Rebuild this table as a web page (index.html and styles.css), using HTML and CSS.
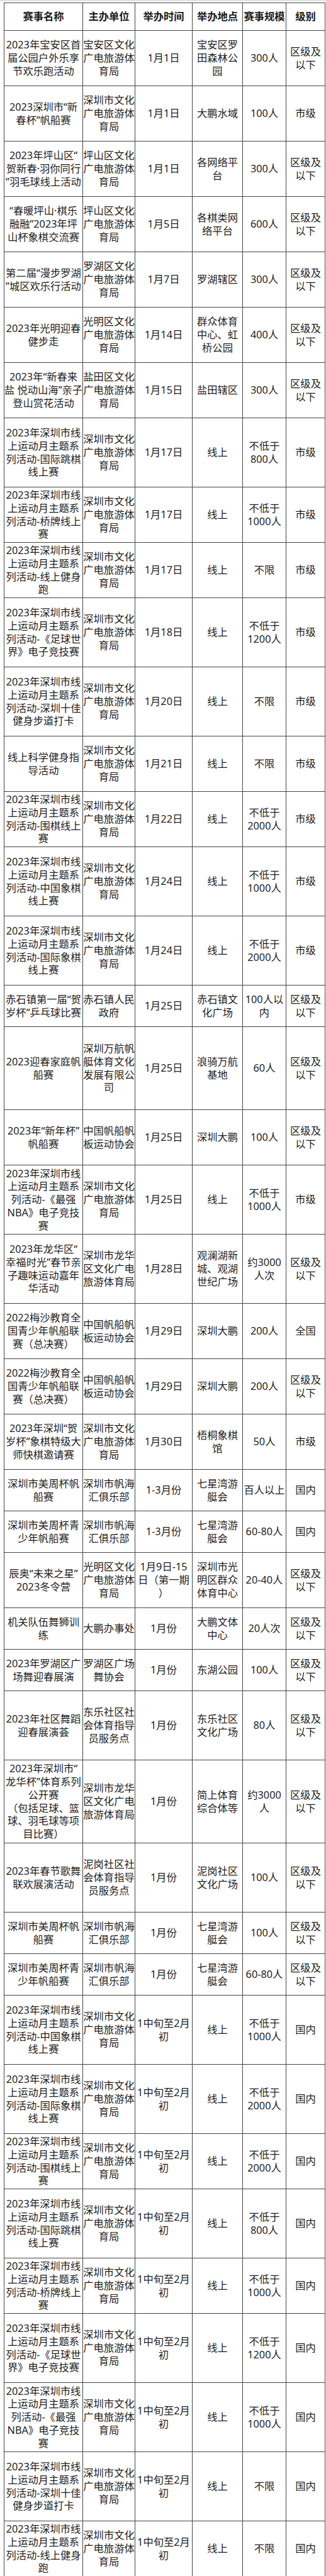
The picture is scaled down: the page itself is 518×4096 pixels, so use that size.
FILE: index.html
```html
<!DOCTYPE html>
<html lang="zh-CN">
<head>
<meta charset="utf-8">
<title>赛事列表</title>
<link rel="stylesheet" href="styles.css">
</head>
<body>
<div class="topbar"></div>
<table class="sheet">
<colgroup><col class="c1"><col class="c2"><col class="c3"><col class="c4"><col class="c5"><col class="c6"></colgroup>
<thead>
<tr class="hd"><th>赛事名称</th><th>主办单位</th><th>举办时间</th><th>举办地点</th><th>赛事规模</th><th>级别</th></tr>
</thead>
<tbody>
<tr class="u4"><td>2023年宝安区首<br>届公园户外乐享<br>节欢乐跑活动</td><td>宝安区文化<br>广电旅游体<br>育局</td><td>1月1日</td><td>宝安区罗<br>田森林公<br>园</td><td>300人</td><td>区级及<br>以下</td></tr>
<tr class="u4"><td>2023深圳市“新<br>春杯”帆船赛</td><td>深圳市文化<br>广电旅游体<br>育局</td><td>1月1日</td><td>大鹏水域</td><td>100人</td><td>市级</td></tr>
<tr class="u4"><td>2023年坪山区“<br>贺新春·羽你同行<br>”羽毛球线上活动</td><td>坪山区文化<br>广电旅游体<br>育局</td><td>1月1日</td><td>各网络平<br>台</td><td>300人</td><td>区级及<br>以下</td></tr>
<tr class="u4"><td>“春暖坪山·棋乐<br>融融”2023年坪<br>山杯象棋交流赛</td><td>坪山区文化<br>广电旅游体<br>育局</td><td>1月5日</td><td>各棋类网<br>络平台</td><td>600人</td><td>区级及<br>以下</td></tr>
<tr class="u4"><td>第二届“漫步罗湖<br>”城区欢乐行活动</td><td>罗湖区文化<br>广电旅游体<br>育局</td><td>1月7日</td><td>罗湖辖区</td><td>300人</td><td>区级及<br>以下</td></tr>
<tr class="u4"><td>2023年光明迎春<br>健步走</td><td>光明区文化<br>广电旅游体<br>育局</td><td>1月14日</td><td>群众体育<br>中心、虹<br>桥公园</td><td>400人</td><td>区级及<br>以下</td></tr>
<tr class="u4"><td>2023年“新春来<br>盐 悦动山海”亲子<br>登山赏花活动</td><td>盐田区文化<br>广电旅游体<br>育局</td><td>1月15日</td><td>盐田辖区</td><td>300人</td><td>区级及<br>以下</td></tr>
<tr class="u5"><td>2023年深圳市线<br>上运动月主题系<br>列活动-国际跳棋<br>线上赛</td><td>深圳市文化<br>广电旅游体<br>育局</td><td>1月17日</td><td>线上</td><td>不低于<br>800人</td><td>市级</td></tr>
<tr class="u4"><td>2023年深圳市线<br>上运动月主题系<br>列活动-桥牌线上<br>赛</td><td>深圳市文化<br>广电旅游体<br>育局</td><td>1月17日</td><td>线上</td><td>不低于<br>1000人</td><td>市级</td></tr>
<tr class="u4"><td>2023年深圳市线<br>上运动月主题系<br>列活动-线上健身<br>跑</td><td>深圳市文化<br>广电旅游体<br>育局</td><td>1月17日</td><td>线上</td><td>不限</td><td>市级</td></tr>
<tr class="u5"><td>2023年深圳市线<br>上运动月主题系<br>列活动-《足球世<br>界》电子竞技赛</td><td>深圳市文化<br>广电旅游体<br>育局</td><td>1月18日</td><td>线上</td><td>不低于<br>1200人</td><td>市级</td></tr>
<tr class="u5"><td>2023年深圳市线<br>上运动月主题系<br>列活动-深圳十佳<br>健身步道打卡</td><td>深圳市文化<br>广电旅游体<br>育局</td><td>1月20日</td><td>线上</td><td>不限</td><td>市级</td></tr>
<tr class="u4"><td>线上科学健身指<br>导活动</td><td>深圳市文化<br>广电旅游体<br>育局</td><td>1月21日</td><td>线上</td><td>不限</td><td>市级</td></tr>
<tr class="u4"><td>2023年深圳市线<br>上运动月主题系<br>列活动-围棋线上<br>赛</td><td>深圳市文化<br>广电旅游体<br>育局</td><td>1月22日</td><td>线上</td><td>不低于<br>2000人</td><td>市级</td></tr>
<tr class="u5"><td>2023年深圳市线<br>上运动月主题系<br>列活动-中国象棋<br>线上赛</td><td>深圳市文化<br>广电旅游体<br>育局</td><td>1月24日</td><td>线上</td><td>不低于<br>1000人</td><td>市级</td></tr>
<tr class="u5"><td>2023年深圳市线<br>上运动月主题系<br>列活动-国际象棋<br>线上赛</td><td>深圳市文化<br>广电旅游体<br>育局</td><td>1月24日</td><td>线上</td><td>不低于<br>2000人</td><td>市级</td></tr>
<tr class="u3"><td>赤石镇第一届“贺<br>岁杯”乒乓球比赛</td><td>赤石镇人民<br>政府</td><td>1月25日</td><td>赤石镇文<br>化广场</td><td>100人以<br>内</td><td>区级及<br>以下</td></tr>
<tr class="u6"><td>2023迎春家庭帆<br>船赛</td><td>深圳万航帆<br>艇体育文化<br>发展有限公<br>司</td><td>1月25日</td><td>浪骑万航<br>基地</td><td>60人</td><td>区级及<br>以下</td></tr>
<tr class="u4"><td>2023年“新年杯”<br>帆船赛</td><td>中国帆船帆<br>板运动协会</td><td>1月25日</td><td>深圳大鹏</td><td>100人</td><td>区级及<br>以下</td></tr>
<tr class="u5"><td>2023年深圳市线<br>上运动月主题系<br>列活动-《最强<br>NBA》电子竞技<br>赛</td><td>深圳市文化<br>广电旅游体<br>育局</td><td>1月25日</td><td>线上</td><td>不低于<br>1000人</td><td>市级</td></tr>
<tr class="u5"><td>2023年龙华区“<br>幸福时光”春节亲<br>子趣味运动嘉年<br>华活动</td><td>深圳市龙华<br>区文化广电<br>旅游体育局</td><td>1月28日</td><td>观澜湖新<br>城、观湖<br>世纪广场</td><td>约3000<br>人次</td><td>区级及<br>以下</td></tr>
<tr class="u4"><td>2022梅沙教育全<br>国青少年帆船联<br>赛（总决赛）</td><td>中国帆船帆<br>板运动协会</td><td>1月29日</td><td>深圳大鹏</td><td>200人</td><td>全国</td></tr>
<tr class="u4"><td>2022梅沙教育全<br>国青少年帆船联<br>赛（总决赛）</td><td>中国帆船帆<br>板运动协会</td><td>1月29日</td><td>深圳大鹏</td><td>200人</td><td>区级及<br>以下</td></tr>
<tr class="u4"><td>2023年深圳“贺<br>岁杯”象棋特级大<br>师快棋邀请赛</td><td>深圳市文化<br>广电旅游体<br>育局</td><td>1月30日</td><td>梧桐象棋<br>馆</td><td>50人</td><td>市级</td></tr>
<tr class="u3"><td>深圳市美周杯帆<br>船赛</td><td>深圳市帆海<br>汇俱乐部</td><td>1-3月份</td><td>七星湾游<br>艇会</td><td>百人以上</td><td>国内</td></tr>
<tr class="u3"><td>深圳市美周杯青<br>少年帆船赛</td><td>深圳市帆海<br>汇俱乐部</td><td>1-3月份</td><td>七星湾游<br>艇会</td><td>60-80人</td><td>国内</td></tr>
<tr class="u4"><td>辰奥“未来之星”<br>2023冬令营</td><td>光明区文化<br>广电旅游体<br>育局</td><td>1月9日-15<br>日（第一期<br>）</td><td>深圳市光<br>明区群众<br>体育中心</td><td>20-40人</td><td>区级及<br>以下</td></tr>
<tr class="u3"><td>机关队伍舞狮训<br>练</td><td>大鹏办事处</td><td>1月份</td><td>大鹏文体<br>中心</td><td>20人次</td><td>区级及<br>以下</td></tr>
<tr class="u3"><td>2023年罗湖区广<br>场舞迎春展演</td><td>罗湖区广场<br>舞协会</td><td>1月份</td><td>东湖公园</td><td>100人</td><td>区级及<br>以下</td></tr>
<tr class="u5"><td>2023年社区舞蹈<br>迎春展演荟</td><td>东乐社区社<br>会体育指导<br>员服务点</td><td>1月份</td><td>东乐社区<br>文化广场</td><td>80人</td><td>区级及<br>以下</td></tr>
<tr class="u6"><td>2023年深圳市“<br>龙华杯”体育系列<br>公开赛<br>（包括足球、篮<br>球、羽毛球等项<br>目比赛）</td><td>深圳市龙华<br>区文化广电<br>旅游体育局</td><td>1月份</td><td>简上体育<br>综合体等</td><td>约3000<br>人</td><td>区级及<br>以下</td></tr>
<tr class="u5"><td>2023年春节歌舞<br>联欢展演活动</td><td>泥岗社区社<br>会体育指导<br>员服务点</td><td>1月份</td><td>泥岗社区<br>文化广场</td><td>100人</td><td>区级及<br>以下</td></tr>
<tr class="u3"><td>深圳市美周杯帆<br>船赛</td><td>深圳市帆海<br>汇俱乐部</td><td>1月份</td><td>七星湾游<br>艇会</td><td>100人</td><td>区级及<br>以下</td></tr>
<tr class="u3"><td>深圳市美周杯青<br>少年帆船赛</td><td>深圳市帆海<br>汇俱乐部</td><td>1月份</td><td>七星湾游<br>艇会</td><td>60-80人</td><td>区级及<br>以下</td></tr>
<tr class="u5"><td>2023年深圳市线<br>上运动月主题系<br>列活动-中国象棋<br>线上赛</td><td>深圳市文化<br>广电旅游体<br>育局</td><td>1中旬至2月<br>初</td><td>线上</td><td>不低于<br>1000人</td><td>国内</td></tr>
<tr class="u5"><td>2023年深圳市线<br>上运动月主题系<br>列活动-国际象棋<br>线上赛</td><td>深圳市文化<br>广电旅游体<br>育局</td><td>1中旬至2月<br>初</td><td>线上</td><td>不低于<br>2000人</td><td>国内</td></tr>
<tr class="u4"><td>2023年深圳市线<br>上运动月主题系<br>列活动-围棋线上<br>赛</td><td>深圳市文化<br>广电旅游体<br>育局</td><td>1中旬至2月<br>初</td><td>线上</td><td>不低于<br>2000人</td><td>国内</td></tr>
<tr class="u5"><td>2023年深圳市线<br>上运动月主题系<br>列活动-国际跳棋<br>线上赛</td><td>深圳市文化<br>广电旅游体<br>育局</td><td>1中旬至2月<br>初</td><td>线上</td><td>不低于<br>800人</td><td>国内</td></tr>
<tr class="u4"><td>2023年深圳市线<br>上运动月主题系<br>列活动-桥牌线上<br>赛</td><td>深圳市文化<br>广电旅游体<br>育局</td><td>1中旬至2月<br>初</td><td>线上</td><td>不低于<br>1000人</td><td>国内</td></tr>
<tr class="u5"><td>2023年深圳市线<br>上运动月主题系<br>列活动-《足球世<br>界》电子竞技赛</td><td>深圳市文化<br>广电旅游体<br>育局</td><td>1中旬至2月<br>初</td><td>线上</td><td>不低于<br>1200人</td><td>国内</td></tr>
<tr class="u5"><td>2023年深圳市线<br>上运动月主题系<br>列活动-《最强<br>NBA》电子竞技<br>赛</td><td>深圳市文化<br>广电旅游体<br>育局</td><td>1中旬至2月<br>初</td><td>线上</td><td>不低于<br>1000人</td><td>国内</td></tr>
<tr class="u5"><td>2023年深圳市线<br>上运动月主题系<br>列活动-深圳十佳<br>健身步道打卡</td><td>深圳市文化<br>广电旅游体<br>育局</td><td>1中旬至2月<br>初</td><td>线上</td><td>不限</td><td>国内</td></tr>
<tr class="u4"><td>2023年深圳市线<br>上运动月主题系<br>列活动-线上健身<br>跑</td><td>深圳市文化<br>广电旅游体<br>育局</td><td>1中旬至2月<br>初</td><td>线上</td><td>不限</td><td>国内</td></tr>
</tbody>
</table>
</body>
</html>
```

FILE: styles.css
```css
html, body {
  margin: 0;
  padding: 0;
  background: #ffffff;
}

body {
  font-family: "Noto Sans", "Noto Sans CJK SC", sans-serif;
  color: #1e1e1e;
}

.topbar {
  height: 2px;
  background: #e2e2e2;
}

.sheet {
  margin: 2px 0 0 6px;
  width: 510px;
  border-collapse: collapse;
  table-layout: fixed;
}

.c1 { width: 125px; }
.c2 { width: 83px; }
.c3 { width: 91px; }
.c4 { width: 80px; }
.c5 { width: 69px; }
.c6 { width: 62px; }

.sheet th,
.sheet td {
  border: 1px solid #454545;
  padding: 0;
  text-align: center;
  vertical-align: middle;
  font-size: 16.3px;
  line-height: 20.7px;
  white-space: nowrap;
  overflow: visible;
}

.sheet th {
  font-weight: 700;
  color: #1a1a1a;
}

.hd { height: 44px; }
.u3 { height: 66px; }
.u4 { height: 88px; }
.u5 { height: 110px; }
.u6 { height: 132px; }
```
